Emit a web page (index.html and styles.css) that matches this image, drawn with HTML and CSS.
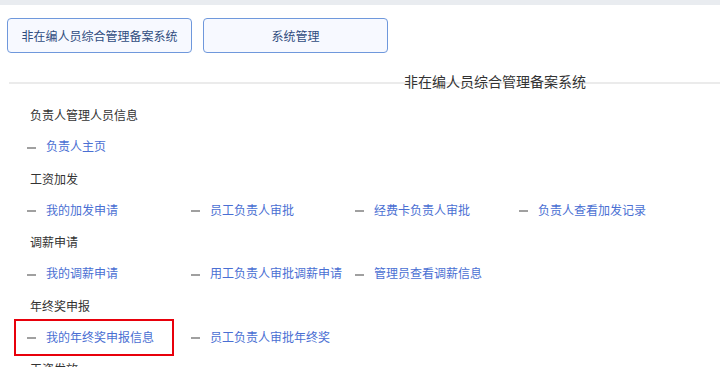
FILE: index.html
```html
<!DOCTYPE html>
<html lang="zh-CN">
<head>
<meta charset="utf-8">
<title>非在编人员综合管理备案系统</title>
<link rel="stylesheet" href="styles.css">
</head>
<body>
<div class="topbar"></div>
<div class="tabs">
  <button class="tab">非在编人员综合管理备案系统</button>
  <button class="tab">系统管理</button>
</div>
<div class="panel">
  <div class="divider"></div>
  <div class="title">非在编人员综合管理备案系统</div>
  <div class="menu">
    <div class="group">负责人管理人员信息</div>
    <div class="links">
      <a class="item"><span class="dash"></span>负责人主页</a>
    </div>
    <div class="group">工资加发</div>
    <div class="links">
      <a class="item"><span class="dash"></span>我的加发申请</a>
      <a class="item"><span class="dash"></span>员工负责人审批</a>
      <a class="item"><span class="dash"></span>经费卡负责人审批</a>
      <a class="item"><span class="dash"></span>负责人查看加发记录</a>
    </div>
    <div class="group">调薪申请</div>
    <div class="links">
      <a class="item"><span class="dash"></span>我的调薪申请</a>
      <a class="item"><span class="dash"></span>用工负责人审批调薪申请</a>
      <a class="item"><span class="dash"></span>管理员查看调薪信息</a>
    </div>
    <div class="group">年终奖申报</div>
    <div class="links">
      <a class="item marked"><span class="dash"></span>我的年终奖申报信息</a>
      <a class="item"><span class="dash"></span>员工负责人审批年终奖</a>
    </div>
    <div class="group">工资发放</div>
  </div>
</div>
</body>
</html>
```
FILE: styles.css
```css
html, body {
  margin: 0;
  padding: 0;
  background: #fff;
  overflow: hidden;
}
body {
  font-family: "Noto Sans CJK SC", "Noto Sans", sans-serif;
  font-size: 12px;
  color: #333;
  width: 720px;
  height: 367px;
}
.topbar {
  height: 5px;
  background: #e9ecf0;
}
.tabs {
  display: flex;
  gap: 11px;
  padding: 13px 0 0 7px;
}
.tab {
  width: 185px;
  height: 35px;
  box-sizing: border-box;
  border: 1px solid #6f98dc;
  border-radius: 4px;
  background: #f7f9ff;
  color: #2f4c7e;
  font-family: inherit;
  font-size: 12px;
  padding: 0;
}
.panel {
  padding: 29px 0 0 9px;
}
.divider {
  height: 2px;
  background: #ebebeb;
}
.title {
  margin-top: -12px;
  padding-left: 395px;
  font-size: 14px;
  line-height: 18px;
  color: #333;
}
.menu {
  padding-top: 9px;
}
.group {
  height: 31px;
  line-height: 31px;
  padding-left: 21px;
}
.links {
  display: flex;
  height: 32.5px;
  line-height: 32.5px;
  padding-left: 18px;
}
.item {
  position: relative;
  width: 164px;
  color: #4a6fd3;
  white-space: nowrap;
  cursor: pointer;
}
.dash {
  display: inline-block;
  width: 9px;
  height: 2px;
  margin-right: 10px;
  background: #a0a0a0;
  vertical-align: middle;
}
.marked::after {
  content: "";
  position: absolute;
  left: -13px;
  top: -2px;
  width: 160px;
  height: 37px;
  box-sizing: border-box;
  border: 2px solid #e8000b;
}
```
